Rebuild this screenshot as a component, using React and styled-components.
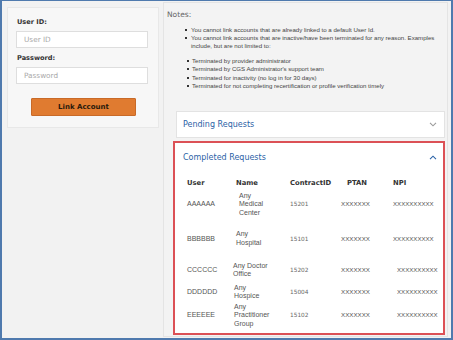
import React from "react";
import styled, { createGlobalStyle } from "styled-components";

const Global = createGlobalStyle`
  html, body { margin: 0; padding: 0; background: #f2f2f2; }
  body { font-family: "DejaVu Sans", Verdana, sans-serif; }
  *, *::before, *::after { box-sizing: border-box; }
`;

const Frame = styled.div`
  width: 453px;
  height: 340px;
  border-style: solid;
  border-color: #4f7aae;
  border-width: 1px 2px 2px 2px;
  background: #f2f2f2;
  display: flex;
  overflow: hidden;
`;

const LeftCol = styled.div`
  width: 161px;
  flex: none;
  padding: 6px 0 0 5px;
`;

const Card = styled.div`
  width: 152px;
  height: 121px;
  background: #f7f7f7;
  border: 1px solid #e8e8e8;
  padding: 10px 0 0 8px;
  display: flex;
  flex-direction: column;
  align-items: flex-start;
`;

const Label = styled.label`
  display: block;
  margin: ${(p) => p.$top || 0}px 0 0 1px;
  font-family: "DejaVu Sans", Verdana, sans-serif;
  font-weight: bold;
  font-size: 6.6px;
  line-height: 8px;
  color: #333;
`;

const Input = styled.input`
  display: block;
  width: 132px;
  height: 17px;
  margin-top: 5px;
  border: 1px solid #dedede;
  background: #fff;
  padding: 0 0 0 7px;
  font-family: "DejaVu Sans", Verdana, sans-serif;
  font-size: 7.3px;
  color: #333;
  outline: none;
  &::placeholder { color: #a8a8a8; }
`;

const Button = styled.button`
  margin: 14px 0 0 15px;
  width: 105px;
  height: 18px;
  background: #e07b30;
  border: 1px solid #c86a28;
  border-radius: 1px;
  font-family: "DejaVu Sans", Verdana, sans-serif;
  font-weight: bold;
  font-size: 7px;
  color: #2a1a0c;
  padding: 0;
  cursor: pointer;
`;

const NotesBox = styled.div`
  flex: 1;
  margin: 1px 3px 1px 0;
  border: 1px solid #e4e4e4;
  background: #f3f3f3;
  padding: 7px 2px 0 3px;
  display: flex;
  flex-direction: column;
`;

const NotesTitle = styled.div`
  font-family: "DejaVu Sans", Verdana, sans-serif;
  font-size: 7.5px;
  line-height: 10px;
  color: #666;
`;

const List = styled.ul`
  list-style: none;
  margin: ${(p) => p.$top}px 0 0;
  padding: 0 0 0 ${(p) => p.$indent}px;
`;

const Item = styled.li`
  position: relative;
  font-family: "Liberation Sans", Arial, sans-serif;
  font-size: 6.1px;
  line-height: 8.2px;
  color: #444;
  &::before {
    content: "";
    position: absolute;
    left: ${(p) => p.$bullet}px;
    top: 3px;
    width: 2px;
    height: 2px;
    background: #333;
  }
`;

const Requests = styled.div`
  margin-top: 21px;
  display: flex;
  flex-direction: column;
`;

const PendingPanel = styled.div`
  margin-left: 9px;
  height: 27px;
  background: #fff;
  border: 1px solid #e3e3e3;
  display: flex;
  align-items: center;
  justify-content: space-between;
  padding: 0 7px 0 6px;
`;

const CompletedPanel = styled.div`
  margin: 3px 0 0 6px;
  height: 194px;
  background: #fff;
  border: 2px solid #dc5156;
`;

const PanelHeader = styled.div`
  height: 30px;
  display: flex;
  align-items: center;
  justify-content: space-between;
  padding: 0 6px 0 8px;
`;

const PanelTitle = styled.div`
  font-family: "DejaVu Sans", Verdana, sans-serif;
  font-size: 8px;
  color: #2b62a6;
`;

const Table = styled.div`
  margin-top: 4px;
  padding-left: 12px;
`;

const Row = styled.div`
  display: grid;
  grid-template-columns: 49px 54px 51px 52px 1fr;
  align-items: center;
  height: ${(p) => p.$h}px;
`;

const Head = styled.div`
  font-family: "DejaVu Sans", Verdana, sans-serif;
  font-weight: bold;
  font-size: 6.8px;
  color: #333;
  margin-left: ${(p) => p.$dx || 0}px;
`;

const Cell = styled.div`
  font-family: ${(p) =>
    p.$mono ? '"DejaVu Sans", Verdana, sans-serif' : '"Liberation Sans", Arial, sans-serif'};
  font-size: ${(p) => p.$size || 7}px;
  line-height: 8.5px;
  color: ${(p) => p.$color || "#555"};
  margin-left: ${(p) => p.$dx || 0}px;
  white-space: nowrap;
`;

const Chevron = ({ up, color }) => (
  <svg width="8" height="5" viewBox="0 0 8 5" style={{ display: "block" }}>
    <polyline
      points={up ? "1,4.2 4,1.2 7,4.2" : "1,0.8 4,3.8 7,0.8"}
      fill="none"
      stroke={color}
      strokeWidth="1.1"
    />
  </svg>
);

const rows = [
  { user: "AAAAAA", name: ["Any", "Medical", "Center"], nameDx: 3, id: "15201", npiDx: 0, h: 31 },
  { user: "BBBBBB", name: ["Any", "Hospital"], nameDx: 0, id: "15101", npiDx: 0, h: 38 },
  { user: "CCCCCC", name: ["Any Doctor", "Office"], nameDx: -3, id: "15202", npiDx: 4, h: 25 },
  { user: "DDDDDD", name: ["Any", "Hospice"], nameDx: -2, id: "15004", npiDx: 4, h: 19 },
  { user: "EEEEEE", name: ["Any", "Practitioner", "Group"], nameDx: -2, id: "15102", npiDx: 4, h: 27 },
];

export default function App() {
  return (
    <>
      <Global />
      <Frame>
        <LeftCol>
          <Card>
            <Label>User ID:</Label>
            <Input placeholder="User ID" />
            <Label $top={6}>Password:</Label>
            <Input placeholder="Password" type="password" />
            <Button>Link Account</Button>
          </Card>
        </LeftCol>
        <NotesBox>
          <NotesTitle>Notes:</NotesTitle>
          <List $top={6} $indent={24}>
            <Item $bullet={-6}>You cannot link accounts that are already linked to a default User Id.</Item>
            <Item $bullet={-6}>
              You cannot link accounts that are inactive/have been terminated for any reason. Examples
              include, but are not limited to:
              <List $top={6.5} $indent={1}>
                <Item $bullet={-5}>Terminated by provider administrator</Item>
                <Item $bullet={-5}>Terminated by CGS Administrator's support team</Item>
                <Item $bullet={-5}>Terminated for inactivity (no log in for 30 days)</Item>
                <Item $bullet={-5}>Terminated for not completing recertification or profile verification timely</Item>
              </List>
            </Item>
          </List>
          <Requests>
            <PendingPanel>
              <PanelTitle>Pending Requests</PanelTitle>
              <Chevron color="#9a9a9a" />
            </PendingPanel>
            <CompletedPanel>
              <PanelHeader>
                <PanelTitle>Completed Requests</PanelTitle>
                <Chevron up color="#2b62a6" />
              </PanelHeader>
              <Table>
                <Row $h={12}>
                  <Head>User</Head>
                  <Head>Name</Head>
                  <Head>ContractID</Head>
                  <Head $dx={6}>PTAN</Head>
                  <Head>NPI</Head>
                </Row>
                {rows.map((r) => (
                  <Row key={r.user} $h={r.h}>
                    <Cell>{r.user}</Cell>
                    <Cell $dx={r.nameDx}>
                      {r.name.map((n, i) => (
                        <div key={i}>{n}</div>
                      ))}
                    </Cell>
                    <Cell $mono $size={5.8} $color="#666">{r.id}</Cell>
                    <Cell $size={6.2}>XXXXXXX</Cell>
                    <Cell $size={6.1} $dx={r.npiDx}>XXXXXXXXXX</Cell>
                  </Row>
                ))}
              </Table>
            </CompletedPanel>
          </Requests>
        </NotesBox>
      </Frame>
    </>
  );
}
